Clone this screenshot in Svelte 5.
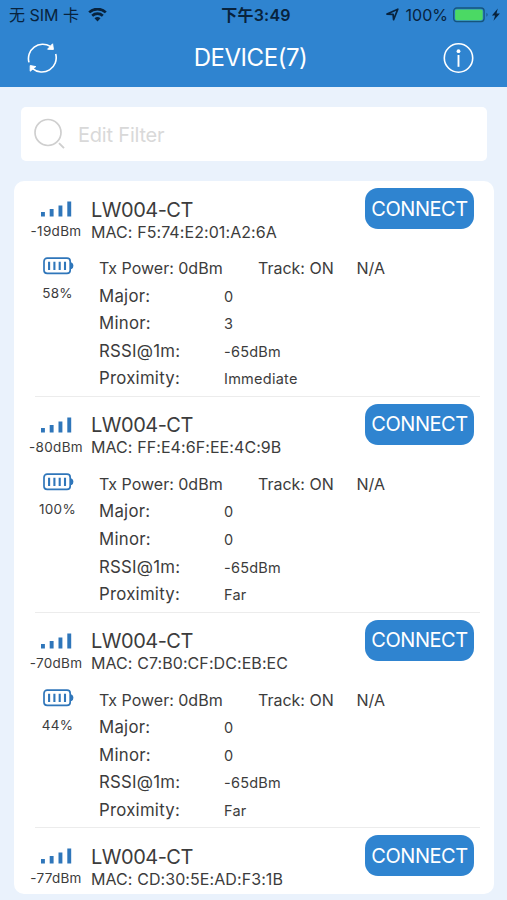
<script>
	let filter = $state('');

	const devices = [
		{ name: 'LW004-CT', mac: 'F5:74:E2:01:A2:6A', rssi: -19, battery: 58, beacon: { major: 0, minor: 3, proximity: 'Immediate' } },
		{ name: 'LW004-CT', mac: 'FF:E4:6F:EE:4C:9B', rssi: -80, battery: 100, beacon: { major: 0, minor: 0, proximity: 'Far' } },
		{ name: 'LW004-CT', mac: 'C7:B0:CF:DC:EB:EC', rssi: -70, battery: 44, beacon: { major: 0, minor: 0, proximity: 'Far' } },
		{ name: 'LW004-CT', mac: 'CD:30:5E:AD:F3:1B', rssi: -77 }
	];
</script>

<div class="screen">
	<header>
		<div class="status">
			<div class="carrier">
				<span>无 SIM 卡</span>
				<svg width="19" height="14" viewBox="0 0 19 14">
					<path d="M1.2 4.4a12 12 0 0 1 16.6 0" fill="none" stroke="currentColor" stroke-width="2.7" />
					<path d="M4.2 7.7a7.7 7.7 0 0 1 10.6 0" fill="none" stroke="currentColor" stroke-width="2.6" />
					<path d="M6.5 10.3a4.4 4.4 0 0 1 6 0L9.5 13.5z" fill="currentColor" />
				</svg>
			</div>
			<span class="time">下午3:49</span>
			<div class="power">
				<svg width="13" height="13" viewBox="0 0 13 13">
					<path d="M1 6.1 11.8 1.2 7.6 11.6 7.1 6.4z" fill="none" stroke="currentColor" stroke-width="1.7" stroke-linejoin="round" />
				</svg>
				<span>100%</span>
				<svg class="charge" width="48" height="16" viewBox="0 0 48 16">
					<rect x=".7" y="1" width="30.4" height="13.6" rx="3" fill="none" stroke="#16557c" stroke-width="1.3" />
					<rect x="2.1" y="2.4" width="27.6" height="10.8" rx="1.6" fill="#4bd964" />
					<path d="M33.5 5.8q2.2 2 0 4z" fill="#16557c" />
					<path d="M44.8 1.6 38.9 8.4h3.2l-1.6 5.4 6.4-7.2h-3.4z" fill="currentColor" />
				</svg>
			</div>
		</div>
		<div class="nav">
			<button class="icon" aria-label="Refresh">
				<svg width="32" height="32" viewBox="0 0 32 32">
					<path d="M4 20.4A14.3 14.3 0 0 1 25.4 4.4M30.7 12A14.3 14.3 0 0 1 7.6 26.6" fill="none" stroke="currentColor" stroke-width="1.6" />
					<path d="M27.6 1.8 28.4 7.4 22.6 7.2zM5.2 29.2 5.2 23.6 10.8 24.6z" fill="currentColor" stroke="currentColor" stroke-width="1" stroke-linejoin="round" />
				</svg>
			</button>
			<h1>DEVICE(7)</h1>
			<button class="icon" aria-label="About">
				<svg width="32" height="32" viewBox="0 0 32 32">
					<circle cx="16.5" cy="16" r="14.2" fill="none" stroke="currentColor" stroke-width="1.6" />
					<circle cx="16.5" cy="9.2" r="1.9" fill="currentColor" />
					<path d="M16.5 13v11.8" stroke="currentColor" stroke-width="1.9" />
				</svg>
			</button>
		</div>
	</header>

	<label class="search">
		<svg width="32" height="32" viewBox="0 0 32 32">
			<circle cx="14" cy="14.5" r="13" fill="none" stroke="currentColor" stroke-width="1.7" />
			<path d="m25 25.2 5 5" stroke="currentColor" stroke-width="1.9" />
		</svg>
		<input placeholder="Edit Filter" bind:value={filter} />
	</label>

	<main>
		{#each devices as device}
			<article class="device" class:partial={!device.beacon}>
				<aside>
					<svg class="signal" width="33" height="16" viewBox="0 0 33 16">
						<path d="M1 11h3.9v4.5H1zM9.7 8h3.9v7.5H9.7zM18.5 4.5h3.9v11h-3.9zM27.3 .6h3.9v14.9h-3.9z" fill="#2f76ba" />
					</svg>
					<span class="rssi">{device.rssi}dBm</span>
					{#if device.beacon}
						<svg class="battery" width="31" height="18" viewBox="0 0 31 18">
							<rect x="1" y="1.2" width="26.2" height="15.2" rx="3.2" fill="none" stroke="#2f76ba" stroke-width="1.7" />
							<path d="M27.8 5.6h.8q1.8.8 1.8 3.2t-1.8 3.2h-.8z" fill="#2f76ba" />
							<path d="M6.1 4.8v8.2M11.4 4.8v8.2M16.7 4.8v8.2M22 4.8v8.2" stroke="#2f76ba" stroke-width="2.1" />
						</svg>
						<span class="level">{device.battery}%</span>
					{/if}
				</aside>
				<div class="info">
					<div class="top">
						<div>
							<h2>{device.name}</h2>
							<p class="mac">MAC: {device.mac}</p>
						</div>
						<button class="connect">CONNECT</button>
					</div>
					{#if device.beacon}
						<div class="adv">
							<span class="tx">Tx Power: 0dBm</span>
							<span class="track">Track: ON</span>
							<span>N/A</span>
						</div>
						<dl>
							<dt>Major:</dt>
							<dd>{device.beacon.major}</dd>
							<dt>Minor:</dt>
							<dd>{device.beacon.minor}</dd>
							<dt>RSSI@1m:</dt>
							<dd>-65dBm</dd>
							<dt>Proximity:</dt>
							<dd>{device.beacon.proximity}</dd>
						</dl>
					{/if}
				</div>
			</article>
		{/each}
	</main>
</div>

<style>
	:global(body) {
		margin: 0;
		background: #eaf2fc;
	}

	.screen {
		display: flex;
		flex-direction: column;
		box-sizing: border-box;
		height: 900px;
		padding-bottom: 6px;
		overflow: hidden;
		background: #eaf2fc;
		color: #3c3c3c;
		font-family: Inter, 'Noto Sans CJK SC', sans-serif;
	}

	header {
		flex: none;
		height: 87px;
		background: #2f84d0;
		color: #fff;
	}

	.status {
		display: grid;
		grid-template-columns: 1fr auto 1fr;
		align-items: center;
		height: 29px;
		padding: 0 6px 0 9px;
		color: #08233d;
		font-size: 16px;
		line-height: 20px;
	}

	.carrier,
	.power {
		display: flex;
		align-items: center;
	}

	.carrier {
		gap: 9px;
	}

	.power {
		justify-content: flex-end;
		gap: 7px;
	}

	.charge {
		margin-left: -2px;
	}

	.time {
		margin-left: 2px;
		font-weight: 600;
		letter-spacing: 0.2px;
	}

	.nav {
		display: flex;
		align-items: center;
		justify-content: space-between;
		height: 57px;
		padding: 0 33px 0 25px;
	}

	button {
		padding: 0;
		border: 0;
		color: #fff;
		font-family: inherit;
		cursor: pointer;
	}

	.icon {
		width: 32px;
		height: 32px;
		background: none;
	}

	svg {
		display: block;
		flex: none;
	}

	h1,
	h2,
	p,
	dl,
	dd {
		margin: 0;
		font-weight: 400;
	}

	h1 {
		margin-left: 2px;
		font-size: 24px;
		line-height: 30px;
		letter-spacing: -0.45px;
	}

	.search {
		display: flex;
		flex: none;
		align-items: center;
		gap: 12px;
		box-sizing: border-box;
		height: 54px;
		margin: 20px 20px 0 21px;
		padding: 0 13px;
		border-radius: 5px;
		background: #fff;
		color: #cfcfcf;
	}

	input {
		flex: 1;
		min-width: 0;
		padding: 1px 0 0;
		border: 0;
		outline: 0;
		background: none;
		font: 20px Inter, sans-serif;
		letter-spacing: -0.2px;
	}

	input::placeholder {
		color: #d9d9d9;
		opacity: 1;
	}

	main {
		flex: 1;
		min-height: 0;
		margin: 20px 13px 0 14px;
		border-radius: 10px;
		background: #fff;
		overflow: hidden;
	}

	.device {
		display: flex;
		box-sizing: border-box;
		height: 215.8px;
		margin: 0 14px 0 21px;
		border-bottom: 1px solid #ececec;
	}

	.device.partial {
		height: auto;
		border-bottom: 0;
	}

	aside {
		display: flex;
		flex: none;
		flex-direction: column;
		align-items: center;
		width: 64px;
		margin: 20px 0 0 -11px;
		font-size: 13.5px;
		line-height: 18px;
		letter-spacing: 0.3px;
	}

	.rssi {
		margin-top: 5px;
	}

	.battery {
		margin: 17px 0 0 4px;
	}

	.level {
		margin: 9px 0 0 3px;
	}

	.info {
		flex: 1;
		margin-left: 3px;
	}

	.top {
		display: flex;
		align-items: flex-start;
		justify-content: space-between;
		height: 74px;
	}

	.partial .top {
		height: 65px;
	}

	h2 {
		margin-top: 15.5px;
		font-size: 20px;
		line-height: 26px;
		letter-spacing: -0.5px;
	}

	.mac {
		font-size: 16px;
		line-height: 19px;
		letter-spacing: 0.08px;
	}

	.connect {
		width: 109px;
		height: 41px;
		margin: 7px 6px 0 0;
		border-radius: 13px;
		background: #2f84d0;
		font-size: 20px;
		letter-spacing: -0.45px;
	}

	.adv {
		display: flex;
		margin-left: 8px;
		font-size: 16px;
		line-height: 27.6px;
	}

	.tx {
		width: 159px;
	}

	.track {
		width: 98.5px;
	}

	dl {
		display: grid;
		grid-template-columns: 125px 1fr;
		margin-left: 8px;
		font-size: 16.8px;
		line-height: 27.6px;
		letter-spacing: 0.25px;
	}

	dd {
		font-size: 14.5px;
	}
</style>
